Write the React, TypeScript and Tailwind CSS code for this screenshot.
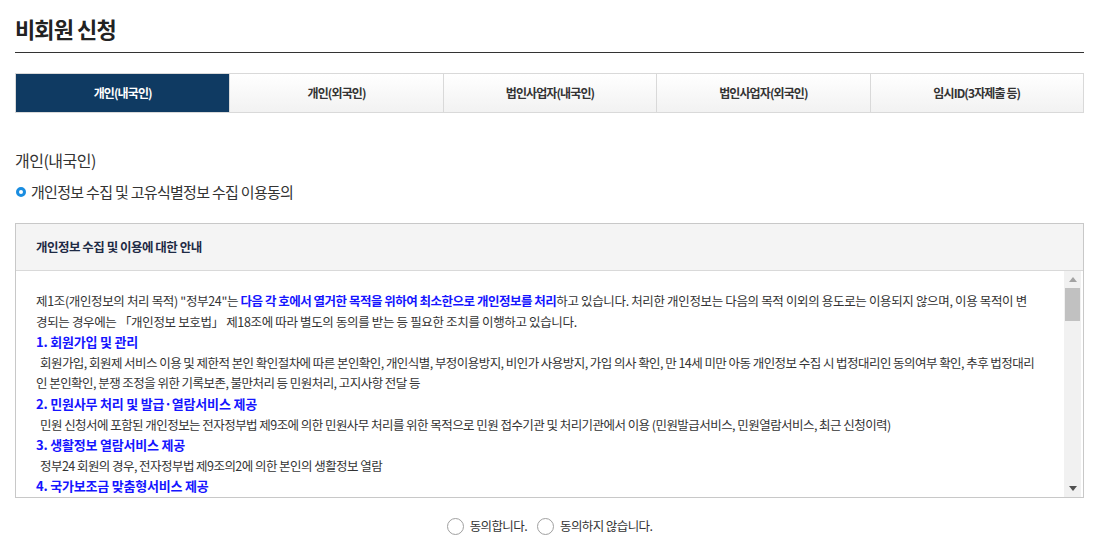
import { useState } from "react";

const tabs = [
  "개인(내국인)",
  "개인(외국인)",
  "법인사업자(내국인)",
  "법인사업자(외국인)",
  "임시ID(3자제출 등)",
];

// each body is split where the reference wraps it
const sections = [
  {
    title: "1. 회원가입 및 관리",
    lines: [
      "회원가입, 회원제 서비스 이용 및 제한적 본인 확인절차에 따른 본인확인, 개인식별, 부정이용방지, 비인가 사용방지, 가입 의사 확인, 만 14세 미만 아동 개인정보 수집 시 법정대리인 동의여부 확인, 추후 법정대리",
      "인 본인확인, 분쟁 조정을 위한 기록보존, 불만처리 등 민원처리, 고지사항 전달 등",
    ],
  },
  {
    title: "2. 민원사무 처리 및 발급·열람서비스 제공",
    lines: [
      "민원 신청서에 포함된 개인정보는 전자정부법 제9조에 의한 민원사무 처리를 위한 목적으로 민원 접수기관 및 처리기관에서 이용 (민원발급서비스, 민원열람서비스, 최근 신청이력)",
    ],
  },
  {
    title: "3. 생활정보 열람서비스 제공",
    lines: ["정부24 회원의 경우, 전자정부법 제9조의2에 의한 본인의 생활정보 열람"],
  },
  {
    title: "4. 국가보조금 맞춤형서비스 제공",
    lines: [],
  },
];

export default function App() {
  const [activeTab, setActiveTab] = useState(0);
  const [agree, setAgree] = useState<"yes" | "no" | null>(null);

  return (
    <div className="min-h-[548px] bg-white pl-[15px] pr-[19px] pt-[13px] font-['Noto_Sans_CJK_KR',sans-serif] text-[#333]">
      <h1 className="border-b border-[#333] pb-[9px] text-[22px] font-bold leading-[30px] tracking-[-0.9px] text-[#222]">
        비회원 신청
      </h1>

      <div className="mt-[20px] grid grid-cols-5 border border-[#d9d9d9]">
        {tabs.map((tab, i) => (
          <button
            key={tab}
            type="button"
            onClick={() => setActiveTab(i)}
            className={`h-[38px] text-[12px] font-bold tracking-[-0.9px] ${
              i > 0 ? "border-l border-[#d9d9d9]" : ""
            } ${
              activeTab === i
                ? "bg-[#0f3a62] text-white"
                : "bg-gradient-to-b from-white to-[#f2f2f2] text-[#333]"
            }`}
          >
            {tab}
          </button>
        ))}
      </div>

      <h2 className="mt-[36px] text-[16px] leading-[22px] tracking-[-0.5px] text-[#333]">
        개인(내국인)
      </h2>

      <div className="mt-[11px] flex items-center gap-[5px]">
        <span className="ml-[1px] h-[10px] w-[10px] rounded-full border-[3px] border-[#1a8de0]" />
        <span className="text-[15px] leading-[20px] tracking-[-0.7px] text-[#333]">
          개인정보 수집 및 고유식별정보 수집 이용동의
        </span>
      </div>

      <div className="mt-[21px] border border-[#c8c8c8]">
        <div className="border-b border-[#d9d9d9] bg-[#f4f4f4] px-[20px] py-[14px]">
          <h3 className="text-[12.5px] font-bold leading-[18px] tracking-[-0.5px] text-[#1e2a44]">
            개인정보 수집 및 이용에 대한 안내
          </h3>
        </div>

        <div className="flex h-[226px]">
          <div className="flex-1 overflow-hidden whitespace-nowrap pl-[20px] pr-[10px] pt-[20px] text-[12.5px] leading-[20.6px] text-[#333]">
            <p className="tracking-[-0.35px]">
              제1조(개인정보의 처리 목적) "정부24"는{" "}
              <b className="tracking-[-0.5px] text-[#1515ff]">
                다음 각 호에서 열거한 목적을 위하여 최소한으로 개인정보를 처리
              </b>
              하고 있습니다. 처리한 개인정보는 다음의 목적 이외의 용도로는 이용되지 않으며, 이용 목적이 변
              <br />
              경되는 경우에는 「개인정보 보호법」 제18조에 따라 별도의 동의를 받는 등 필요한 조치를 이행하고 있습니다.
            </p>
            {sections.map((s) => (
              <div key={s.title}>
                <p className="text-[13px] font-bold tracking-[-0.2px] text-[#1515ff]">{s.title}</p>
                {s.lines.map((line, i) => (
                  <p
                    key={i}
                    className={`tracking-[-0.55px] ${i === 0 ? "pl-[4px]" : ""}`}
                  >
                    {line}
                  </p>
                ))}
              </div>
            ))}
          </div>

          <div className="mr-[2px] flex w-[17px] flex-col bg-[#f1f1f1]">
            <div className="flex h-[17px] items-center justify-center">
              <svg width="8" height="5" viewBox="0 0 8 5">
                <path d="M4 0 L8 5 L0 5 Z" fill="#a3a3a3" />
              </svg>
            </div>
            <div className="mx-[1px] h-[33px] bg-[#c1c1c1]" />
            <div className="flex-1" />
            <div className="flex h-[17px] items-center justify-center">
              <svg width="8" height="5" viewBox="0 0 8 5">
                <path d="M0 0 L8 0 L4 5 Z" fill="#505050" />
              </svg>
            </div>
          </div>
        </div>
      </div>

      <div className="mt-[19px] flex items-center justify-center gap-[10px] text-[12.5px] tracking-[-0.6px] text-[#333]">
        <label className="flex cursor-pointer items-center gap-[6px]">
          <input
            type="radio"
            name="agree"
            checked={agree === "yes"}
            onChange={() => setAgree("yes")}
            className="sr-only"
          />
          <span className="h-[17px] w-[17px] rounded-full border border-[#a0a0a0] bg-white" />
          동의합니다.
        </label>
        <label className="flex cursor-pointer items-center gap-[6px]">
          <input
            type="radio"
            name="agree"
            checked={agree === "no"}
            onChange={() => setAgree("no")}
            className="sr-only"
          />
          <span className="h-[17px] w-[17px] rounded-full border border-[#a0a0a0] bg-white" />
          동의하지 않습니다.
        </label>
      </div>
    </div>
  );
}
